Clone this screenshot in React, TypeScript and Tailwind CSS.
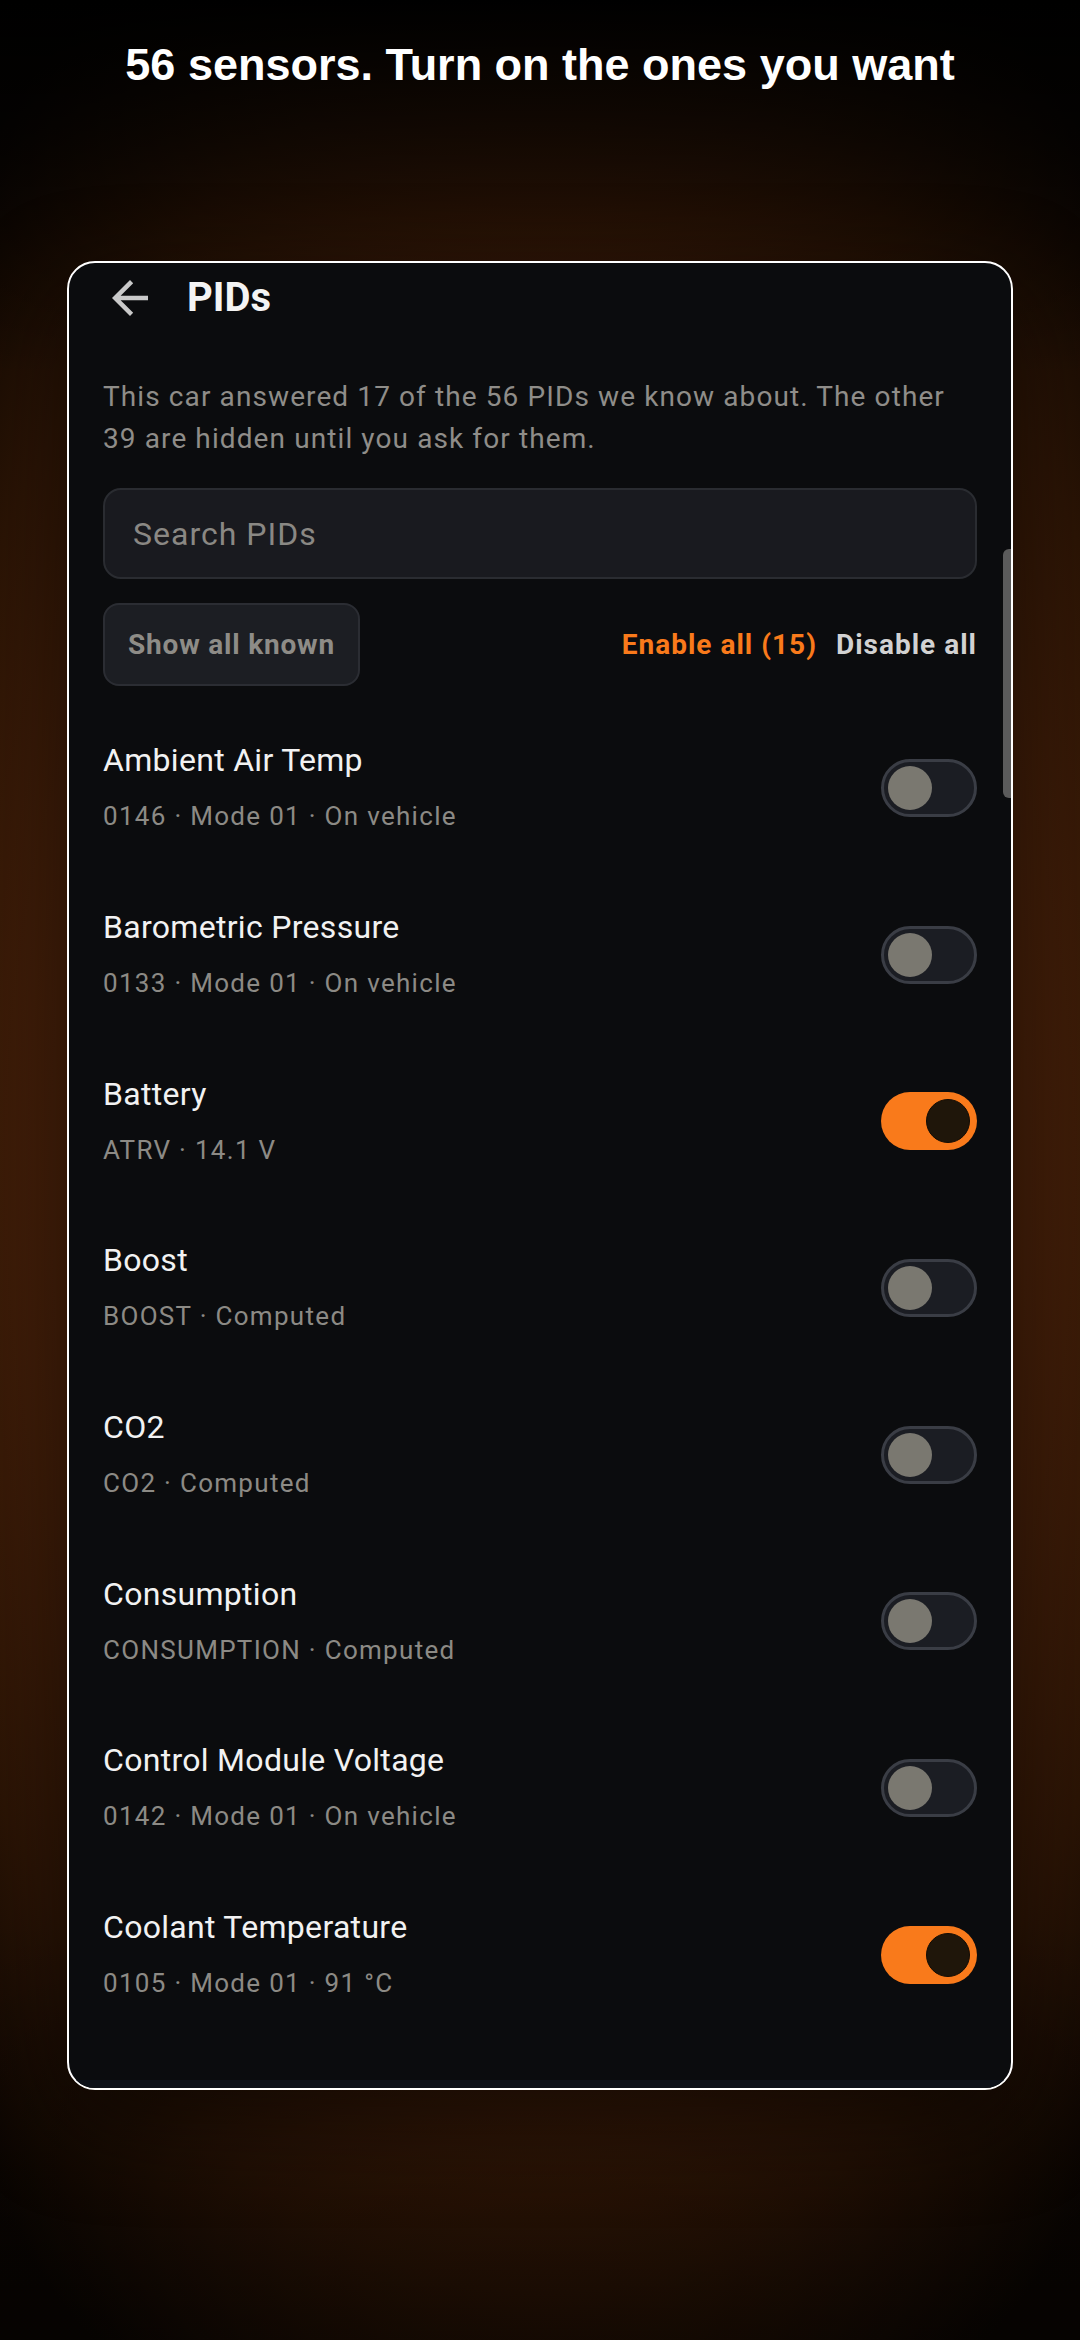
const PIDS = [
  { name: "Ambient Air Temp", meta: "0146 · Mode 01 · On vehicle", on: false },
  { name: "Barometric Pressure", meta: "0133 · Mode 01 · On vehicle", on: false },
  { name: "Battery", meta: "ATRV · 14.1 V", on: true },
  { name: "Boost", meta: "BOOST · Computed", on: false },
  { name: "CO2", meta: "CO2 · Computed", on: false },
  { name: "Consumption", meta: "CONSUMPTION · Computed", on: false },
  { name: "Control Module Voltage", meta: "0142 · Mode 01 · On vehicle", on: false },
  { name: "Coolant Temperature", meta: "0105 · Mode 01 · 91 °C", on: true },
];

function Toggle({ on }: { on: boolean }) {
  if (on) {
    return (
      <div className="flex h-[58px] w-[96px] shrink-0 items-center justify-end rounded-full bg-[#f97a1b] px-[7px]">
        <div className="size-[44px] rounded-full border border-[#120c05] bg-[#1f160a]" />
      </div>
    );
  }
  return (
    <div className="flex h-[58px] w-[96px] shrink-0 items-center rounded-full border-[3px] border-[#3a3d45] bg-[#1b1d23] px-[4px]">
      <div className="size-[44px] rounded-full bg-[#7a7870]" />
    </div>
  );
}

function BackArrow() {
  return (
    <svg viewBox="0 0 24 24" className="size-[54px] shrink-0" aria-hidden>
      <path d="M20 11H7.83l5.59-5.59L12 4l-8 8 8 8 1.41-1.41L7.83 13H20v-2z" fill="#c9c9c9" />
    </svg>
  );
}

export default function App() {
  return (
    <div className="relative h-[2340px] w-[1080px] overflow-hidden bg-[linear-gradient(to_bottom,#000_0%,rgba(0,0,0,0)_16%,rgba(0,0,0,0)_82%,rgba(0,0,0,0.45)_100%),radial-gradient(ellipse_75%_60%_at_50%_50%,#5c290c_0%,#4b220a_55%,#2b1405_80%,#0a0502_100%)]">
      <h1 className="pt-[39px] text-center font-['Liberation_Sans',Arial,sans-serif] text-[45px] leading-[52px] font-bold text-white">
        56 sensors. Turn on the ones you want
      </h1>

      <div className="relative mx-auto mt-[170px] h-[1829px] w-[946px] overflow-hidden rounded-[28px] border-2 border-white bg-[#0b0c0e] px-[34px] font-['Roboto','Noto_Sans',sans-serif] shadow-[0_30px_90px_rgba(0,0,0,0.55)]">
        <div className="mt-[8px] flex h-[54px] items-center gap-[30px]">
          <BackArrow />
          <span className="text-[40px] leading-[48px] font-bold text-[#f4f4f4]">PIDs</span>
        </div>

        <p className="mt-[51px] text-[28px] leading-[42px] tracking-[1.1px] text-[#8f8d89]">
          This car answered 17 of the 56 PIDs we know about. The other 39 are hidden until you ask for them.
        </p>

        <div className="mt-[28px] flex h-[91px] items-center rounded-[18px] border-2 border-[#2a2c31] bg-[#191a1f] px-[28px]">
          <span className="text-[32px] tracking-[1px] text-[#8a8884]">Search PIDs</span>
        </div>

        <div className="mt-[24px] flex h-[83px] items-center justify-between">
          <div className="flex h-[83px] w-[257px] items-center justify-center rounded-[16px] border-2 border-[#2b2d33] bg-[#1c1e23] text-[28px] font-bold tracking-[0.8px] text-[#8e8c87]">
            Show all known
          </div>
          <div className="flex items-center gap-[19px] text-[28px] font-bold tracking-[1px]">
            <span className="text-[#f97a1b]">Enable all (15)</span>
            <span className="text-[#d2d2d2]">Disable all</span>
          </div>
        </div>

        <div className="mt-[17px]">
          {PIDS.map((p) => (
            <div key={p.name} className="flex h-[166.7px] items-center justify-between">
              <div>
                <p className="text-[32px] leading-[44px] tracking-[0.3px] text-[#f2f2f2]">{p.name}</p>
                <p className="mt-[16px] text-[26px] leading-[36px] tracking-[1.3px] text-[#8c8a85]">{p.meta}</p>
              </div>
              <div className="mt-[3px]">
                <Toggle on={p.on} />
              </div>
            </div>
          ))}
          <p className="pt-[35px] text-[32px] leading-[44px] tracking-[0.3px] text-[#f2f2f2]">Distance Since Codes Cleared</p>
        </div>

        <div className="absolute top-[286px] right-0 h-[249px] w-[8px] rounded-l-[6px] bg-[#5b5b5b]" />
        <div className="absolute right-0 bottom-0 left-0 h-[8px] bg-[#0d1119]" />
      </div>
    </div>
  );
}
